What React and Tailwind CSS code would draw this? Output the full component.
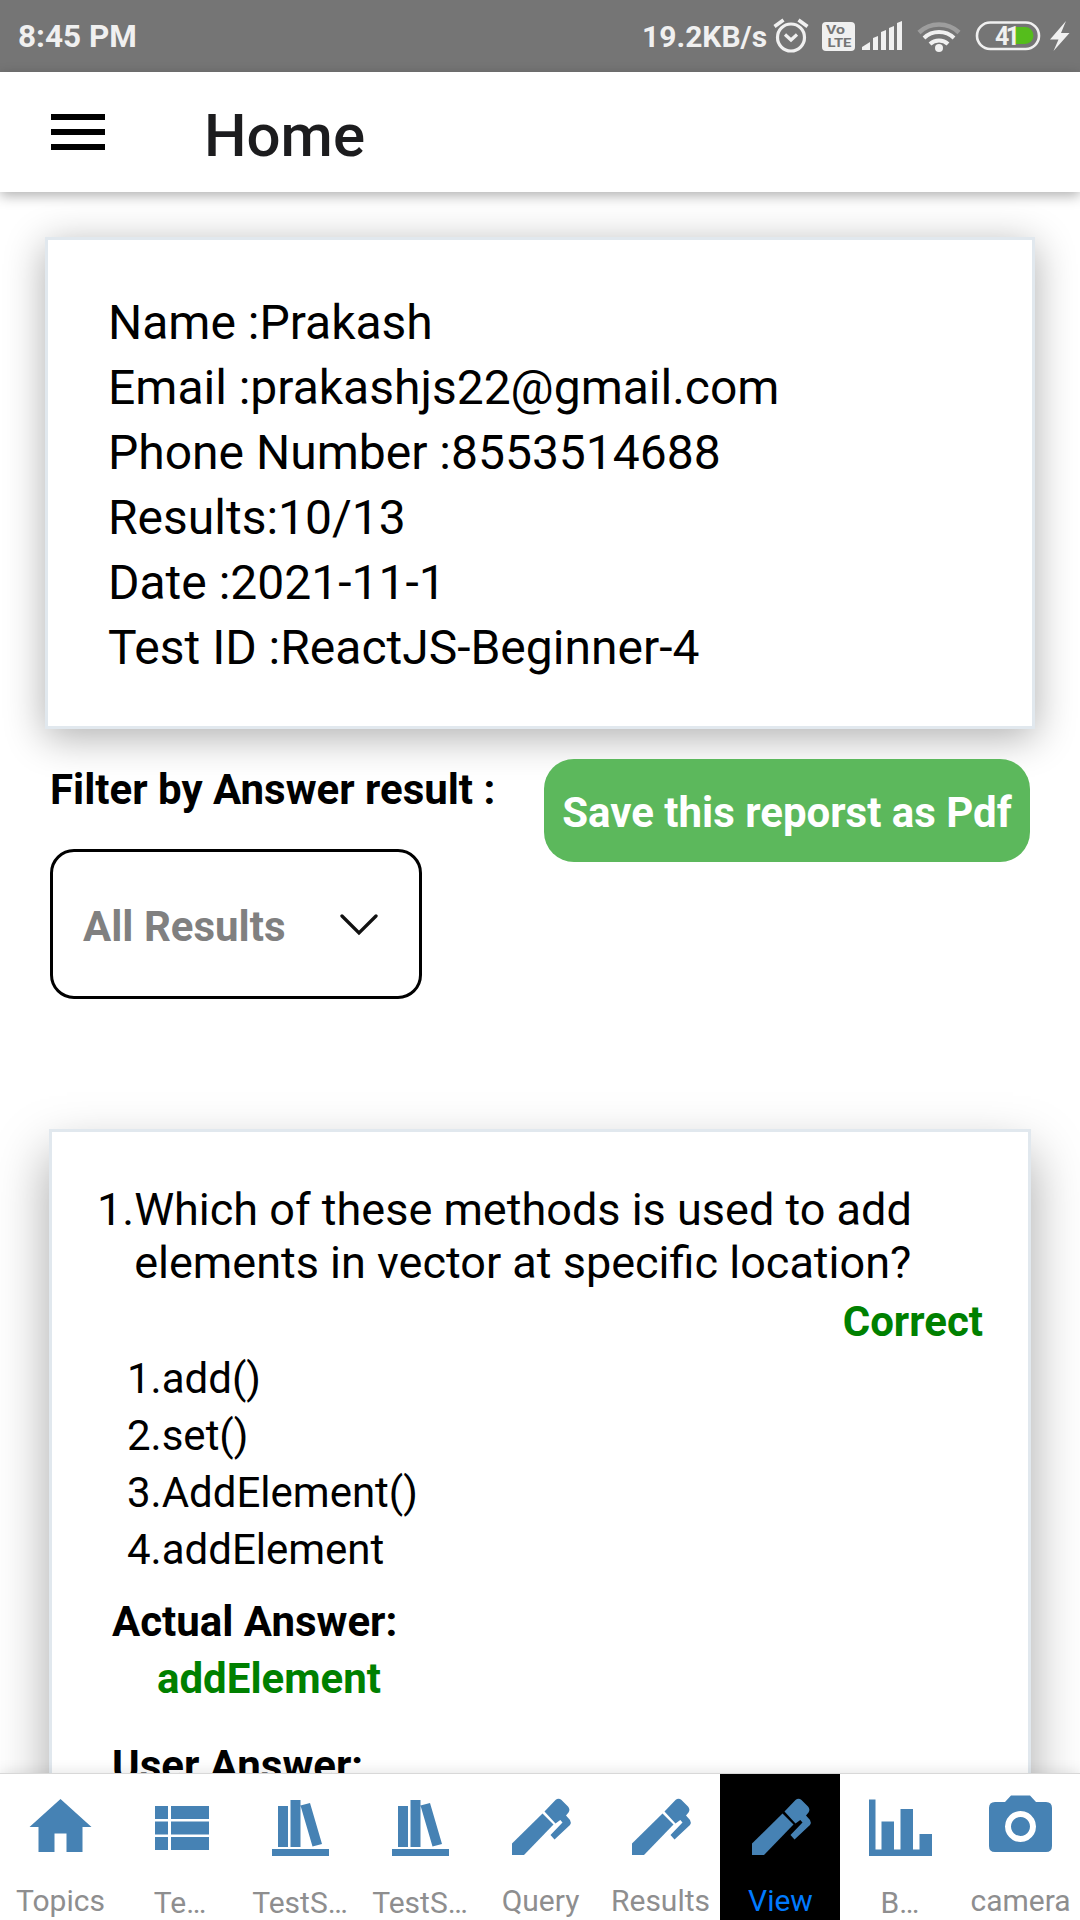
import React from "react";

const INFO = [
  "Name :Prakash",
  "Email :prakashjs22@gmail.com",
  "Phone Number :8553514688",
  "Results:10/13",
  "Date :2021-11-1",
  "Test ID :ReactJS-Beginner-4",
];

const OPTIONS = ["1.add()", "2.set()", "3.AddElement()", "4.addElement"];

function StatusBar() {
  return (
    <div className="flex h-[72px] shrink-0 items-center bg-[#757575] text-[32px] leading-[40px] font-bold text-[#f0f0f0]">
      <span className="mt-[2px] ml-[18px] text-[31.5px] whitespace-nowrap">8:45 PM</span>
      <span className="mt-[1px] ml-auto w-[130px] text-[30px] whitespace-nowrap">19.2KB/s</span>
      <svg className="h-[72px] w-[308px]" viewBox="772 0 308 72" fill="none">
        <g stroke="#f0f0f0" strokeWidth="3.2">
          <circle cx="791" cy="37.500" r="13.500" />
          <path d="M785 34.500l6 5.500 6-5.500" />
          <path d="M774.500 26.500l9-6.500M807.500 26.500l-9-6.500" strokeWidth="3.600" />
        </g>
        <rect x="822" y="22" width="33" height="29" rx="4" fill="#f0f0f0" />
        <text x="826" y="34.300" fontSize="12.500" fontWeight="700" fill="#757575" textLength="19" lengthAdjust="spacingAndGlyphs">Vo</text>
        <text x="827.500" y="47.300" fontSize="13.500" fontWeight="700" fill="#757575" textLength="24" lengthAdjust="spacingAndGlyphs">LTE</text>
        <g fill="#f0f0f0">
          <path d="M862 50v-3l8-5v8z" />
          <path d="M873 50V38l5-2v14zM881 50V32l5-2v20zM889 50V28l5-2v24zM897 50V23l5-2v29z" />
        </g>
        <g fill="none" strokeWidth="4">
          <path d="M919 32.500a29 29 0 0 1 40 0" stroke="#9d9d9d" strokeWidth="4.500" />
          <path d="M924 38a22 22 0 0 1 30 0" stroke="#f0f0f0" />
          <path d="M930 44a13 13 0 0 1 18 0" stroke="#f0f0f0" />
        </g>
        <circle cx="939" cy="48" r="4" fill="#f0f0f0" />
        <rect x="977" y="22.500" width="62" height="26.500" rx="13.200" stroke="#f0f0f0" strokeWidth="2.600" />
        <path d="M1012 27h13a8.500 8.500 0 0 1 0 17h-13z" fill="#55bd1c" />
        <text x="995" y="44.500" fontSize="25" fontWeight="700" fill="#f0f0f0" textLength="25">41</text>
        <path d="M1066 21l-16 18.500h8.500l-5 11.500L1069.500 33h-8.500z" fill="#f0f0f0" />
      </svg>
    </div>
  );
}

function Header() {
  return (
    <header className="relative z-10 flex h-[120px] shrink-0 items-center bg-white shadow-[0_4px_12px_rgba(0,0,0,0.3)]">
      <svg className="ml-[42px] size-[72px]" viewBox="0 0 24 24">
        <path d="M3 18h18v-2H3v2zm0-5h18v-2H3v2zm0-7v2h18V6H3z" />
      </svg>
      <h1 className="mt-[7px] ml-[90px] text-[60px] leading-[72px] font-medium text-[#1c1c1e]">Home</h1>
    </header>
  );
}

function Icon({ name }) {
  if (name === "home") return <path d="M30.500 12L61.500 40h-9v25h-16V46.500h-12V65h-16V40h-9z" />;
  if (name === "list")
    return <path d="M5 19h13v13H5zM21 19h38v13H21zM5 34.500h13v13H5zM21 34.500h38v13H21zM5 50h13v13H5zM21 50h38v13H21z" />;
  if (name === "books")
    return <path d="M8 19h10v41H8zM20.500 13h10v47h-10zM30.500 18.500l9.500-2.500 12 41-9.500 2.500zM2 62h57v7H2z" />;
  if (name === "pen")
    return (
      <>
        <path d="M2 56.500L32.500 26.500 43.500 37.500 14 68H2z" />
        <path d="M34.500 24.500L45.500 13q3-2.500 6 0l6.500 6.500q2.500 3 .500 6l-2.500 3 4 4.500q1.500 2.500 0 5L44.500 52.500l-4-4.500L52.500 35.500l-2.200-2.500-4.800 3.500z" />
      </>
    );
  if (name === "chart") return <path d="M-1 12.500h6.500v50h6V34.500h12.500v28h6.500V22h12.500v40.500h6.500V47H62v22H-1z" />;
  return (
    <path
      fillRule="evenodd"
      d="M21 8.500h19l6 6.500h10q6 0 6 6v38q0 6-6 6H5q-6 0-6-6V21q0-6 6-6h10zM30.500 24a15.500 15.500 0 1 0 .01 0zM30.500 30a9.500 9.500 0 1 1-.01 0z"
    />
  );
}

const TABS = [
  { label: "Topics", icon: "home" },
  { label: "Te…", icon: "list", low: true },
  { label: "TestS…", icon: "books", low: true },
  { label: "TestS…", icon: "books", low: true },
  { label: "Query", icon: "pen" },
  { label: "Results", icon: "pen" },
  { label: "View", icon: "pen", active: true },
  { label: "B…", icon: "chart", low: true },
  { label: "camera", icon: "camera" },
];

function TabBar() {
  return (
    <nav className="relative z-10 grid h-[147px] shrink-0 grid-cols-9 border-t border-[#d8d8d8] bg-white shadow-[0_-2px_12px_rgba(0,0,0,0.1)]">
      {TABS.map((t, i) => (
        <div key={i} className={t.active ? "flex flex-col items-center bg-black text-[#007aff]" : "flex flex-col items-center text-[#8e8e8f]"}>
          <svg className="mt-[13px] ml-[2px] h-[72px] w-[62px] shrink-0 overflow-visible" viewBox="0 0 62 72" fill="#4682b4">
            <Icon name={t.icon} />
          </svg>
          <span className={t.low ? "mt-[26px] text-[30px] leading-[36px] whitespace-nowrap" : "mt-[24px] ml-px text-[30px] leading-[36px] whitespace-nowrap"}>
            {t.label}
          </span>
        </div>
      ))}
    </nav>
  );
}

export default function App() {
  return (
    <div className="flex h-[1920px] w-[1080px] flex-col overflow-hidden bg-white font-['Roboto',sans-serif] text-black">
      <StatusBar />
      <Header />
      <main className="min-h-0 flex-1 overflow-hidden">
        <section className="mt-[45px] ml-[45px] h-[492px] w-[990px] border-[3px] border-[#e1e8ee] bg-white pt-[50px] pl-[60px] shadow-[0_8px_38px_rgba(0,0,0,0.32)]">
          {INFO.map((line) => (
            <p key={line} className="text-[48px] leading-[65px] whitespace-nowrap">{line}</p>
          ))}
        </section>
        <div className="flex h-[400px]">
          <div className="ml-[50px] flex w-[494px] flex-col">
            <p className="mt-[36px] text-[42px] leading-[50px] font-bold whitespace-nowrap">Filter by Answer result :</p>
            <button className="mt-[34px] flex h-[150px] w-[372px] items-center rounded-[24px] border-[3px] border-black text-left">
              <span className="mt-[4px] ml-[30px] text-[42px] font-bold text-[#808080]">All Results</span>
              <svg className="mt-[2px] ml-[55px] h-[22px] w-[38px]" viewBox="0 0 38 22" fill="none" stroke="#111" strokeWidth="3.300" strokeLinecap="round">
                <path d="M2 2l17 17L36 2" />
              </svg>
            </button>
          </div>
          <button className="mt-[30px] flex h-[103px] w-[486px] items-center justify-center rounded-[30px] bg-[#5cb85c] pt-[4px] text-[42px] font-bold whitespace-nowrap text-white">
            Save this reporst as Pdf
          </button>
        </div>
        <section className="ml-[49px] h-[900px] w-[982px] border-[3px] border-[#e1e8ee] bg-white pt-[51px] shadow-[0_24px_50px_rgba(0,0,0,0.35)]">
          <div className="ml-[45px] flex text-[45px] leading-[53px]">
            <span>1.</span>
            <p className="w-[800px]">Which of these methods is used to add elements in vector at specific location?</p>
          </div>
          <p className="mt-[4px] mr-[45px] text-right text-[42px] leading-[57px] font-bold text-[#008000]">Correct</p>
          <ul className="ml-[75px] text-[42px] leading-[57px]">
            {OPTIONS.map((o) => (
              <li key={o}>{o}</li>
            ))}
          </ul>
          <p className="mt-[15px] ml-[60px] text-[42px] leading-[57px] font-bold">Actual Answer:</p>
          <p className="ml-[105px] text-[42px] leading-[57px] font-bold text-[#008000]">addElement</p>
          <p className="mt-[30px] ml-[60px] text-[42px] leading-[57px] font-bold">User Answer:</p>
        </section>
      </main>
      <TabBar />
    </div>
  );
}
